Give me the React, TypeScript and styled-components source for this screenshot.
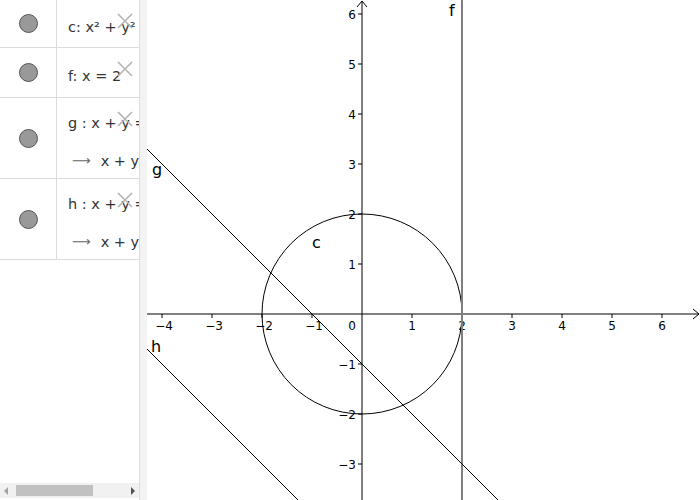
import React from "react";
import styled, { createGlobalStyle } from "styled-components";

const GlobalStyle = createGlobalStyle`
  html, body {
    margin: 0;
    padding: 0;
    background: #ffffff;
    font-family: "DejaVu Sans", "Liberation Sans", sans-serif;
  }
`;

const Layout = styled.div`
  display: flex;
  width: 700px;
  height: 500px;
  overflow: hidden;
`;

const AlgebraView = styled.div`
  width: 139px;
  height: 500px;
  display: flex;
  flex-direction: column;
  background: #ffffff;
`;

const AlgebraList = styled.div`
  flex: 1;
  display: flex;
  flex-direction: column;
`;

const AlgebraRow = styled.div<{ $height: number }>`
  display: flex;
  height: ${({ $height }) => $height}px;
  border-bottom: 1px solid #dcdcdc;
`;

const MarbleCell = styled.div`
  width: 56px;
  flex-shrink: 0;
  display: flex;
  align-items: center;
  justify-content: center;
  border-right: 1px solid #dcdcdc;
`;

const Marble = styled.div`
  width: 17px;
  height: 17px;
  border-radius: 50%;
  background: #999999;
  border: 1px solid #555555;
`;

const DefinitionCell = styled.div`
  position: relative;
  flex: 1;
  overflow: hidden;
  display: flex;
  flex-direction: column;
  justify-content: center;
  gap: 18px;
  padding: 7px 0 0 11px;
  white-space: nowrap;
  font-size: 14.5px;
  color: #333333;
`;

const Line = styled.div`
  line-height: 20px;
`;

const Output = styled.div`
  line-height: 20px;
  padding-left: 4px;
  display: flex;
  align-items: center;
  gap: 10px;
`;

const OutputArrow = styled.span`
  color: #666666;
  font-size: 13px;
`;

const DeleteIcon = styled.svg`
  position: absolute;
  right: 5px;
  top: 12px;
`;

const ScrollBar = styled.div`
  height: 15px;
  margin-bottom: 2px;
  background: #f1f1f1;
  display: flex;
  align-items: center;
  gap: 4px;
  padding: 0 4px;
`;

const ScrollArrow = styled.div<{ $dir: "left" | "right"; $color: string }>`
  width: 0;
  height: 0;
  border-top: 4px solid transparent;
  border-bottom: 4px solid transparent;
  ${({ $dir, $color }) =>
    $dir === "left"
      ? `border-right: 4px solid ${$color};`
      : `border-left: 4px solid ${$color};`}
`;

const ScrollTrack = styled.div`
  flex: 1;
  height: 11px;
  display: flex;
`;

const ScrollThumb = styled.div`
  width: 77px;
  height: 11px;
  margin-left: 4px;
  background: #c1c1c1;
`;

const Splitter = styled.div`
  width: 7px;
  height: 500px;
  background: #f3f3f3;
  border-left: 1px solid #dddddd;
`;

const GraphicsView = styled.div`
  flex: 1;
  height: 500px;
  background: #ffffff;
`;

const Cross = () => (
  <DeleteIcon width="18" height="18" viewBox="0 0 18 18">
    <path d="M2 2 L16 16 M16 2 L2 16" stroke="#b4b4b4" strokeWidth="1.6" />
  </DeleteIcon>
);

type Item = {
  height: number;
  def: React.ReactNode;
  out?: React.ReactNode;
};

const items: Item[] = [
  { height: 47, def: <>c: x² + y² = 4</> },
  { height: 49, def: <>f: x = 2</> },
  { height: 80, def: <>g : x + y = −1</>, out: <>x + y = −1</> },
  { height: 80, def: <>h : x + y = −5</>, out: <>x + y = −5</> },
];

// graphics coordinates
const W = 553;
const H = 500;
const OX = 215;
const OY = 314;
const U = 50;
const px = (x: number) => OX + x * U;
const py = (y: number) => OY - y * U;

const xTicks = [-4, -3, -2, -1, 1, 2, 3, 4, 5, 6];
const yTicks = [-3, -2, -1, 1, 2, 3, 4, 5, 6];
const minus = (n: number) => (n < 0 ? `−${-n}` : `${n}`);

const Graph = () => {
  const xl = -OX / U;
  const xr = (W - OX) / U;
  return (
    <svg width={W} height={H} viewBox={`0 0 ${W} ${H}`}>
      {/* axes */}
      <line x1={0} y1={OY} x2={W - 1} y2={OY} stroke="#000" strokeWidth="1" />
      <path d={`M${W - 7} ${OY - 5} L${W - 1} ${OY} L${W - 7} ${OY + 5}`} fill="none" stroke="#000" />
      <line x1={OX} y1={H} x2={OX} y2={1} stroke="#000" strokeWidth="1" />
      <path d={`M${OX - 5} 7 L${OX} 1 L${OX + 5} 7`} fill="none" stroke="#000" />
      {xTicks.map((t) => (
        <g key={`x${t}`}>
          <line x1={px(t)} y1={OY} x2={px(t)} y2={OY + 4} stroke="#000" />
          <text
            x={px(t) + (t < 0 ? 2 : 0)}
            y={OY + 16}
            fontSize="12"
            textAnchor="middle"
            fontFamily="DejaVu Sans, sans-serif"
          >
            {minus(t)}
          </text>
        </g>
      ))}
      <text x={OX - 6} y={OY + 16} fontSize="12" textAnchor="end" fontFamily="DejaVu Sans, sans-serif">
        0
      </text>
      {yTicks.map((t) => (
        <g key={`y${t}`}>
          <line x1={OX - 4} y1={py(t)} x2={OX} y2={py(t)} stroke="#000" />
          <text
            x={OX - 6}
            y={py(t) + 5}
            fontSize="12"
            textAnchor="end"
            fontFamily="DejaVu Sans, sans-serif"
          >
            {minus(t)}
          </text>
        </g>
      ))}
      {/* c: x² + y² = 4 */}
      <circle cx={OX} cy={OY} r={2 * U} fill="none" stroke="#000" strokeWidth="1" />
      {/* f: x = 2 */}
      <line x1={px(2)} y1={0} x2={px(2)} y2={H} stroke="#7f7f7f" strokeWidth="2" />
      {/* g: x + y = -1 */}
      <line x1={px(xl)} y1={py(-1 - xl)} x2={px(xr)} y2={py(-1 - xr)} stroke="#000" strokeWidth="1" />
      {/* h: x + y = -5 */}
      <line x1={px(xl)} y1={py(-5 - xl)} x2={px(xr)} y2={py(-5 - xr)} stroke="#000" strokeWidth="1" />
      {/* labels */}
      <g fontSize="16" fontFamily="DejaVu Sans, sans-serif" fill="#000">
        <text x={302} y={16}>f</text>
        <text x={5} y={175}>g</text>
        <text x={4} y={352}>h</text>
        <text x={165} y={248}>c</text>
      </g>
    </svg>
  );
};

export default function App() {
  return (
    <>
      <GlobalStyle />
      <Layout>
        <AlgebraView>
          <AlgebraList>
            {items.map((item, i) => (
              <AlgebraRow key={i} $height={item.height}>
                <MarbleCell>
                  <Marble />
                </MarbleCell>
                <DefinitionCell>
                  <Line>{item.def}</Line>
                  {item.out && (
                    <Output>
                      <OutputArrow>⟶</OutputArrow>
                      {item.out}
                    </Output>
                  )}
                  <Cross />
                </DefinitionCell>
              </AlgebraRow>
            ))}
          </AlgebraList>
          <ScrollBar>
            <ScrollArrow $dir="left" $color="#a3a3a3" />
            <ScrollTrack>
              <ScrollThumb />
            </ScrollTrack>
            <ScrollArrow $dir="right" $color="#505050" />
          </ScrollBar>
        </AlgebraView>
        <Splitter />
        <GraphicsView>
          <Graph />
        </GraphicsView>
      </Layout>
    </>
  );
}
